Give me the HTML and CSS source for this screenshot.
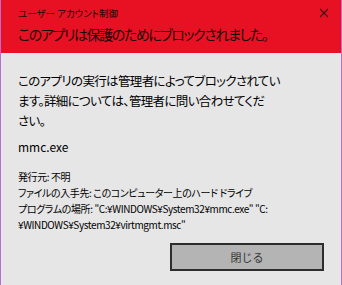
FILE: index.html
```html
<!DOCTYPE html>
<html lang="ja">
<head>
    <meta charset="UTF-8">
    <title>ユーザー アカウント制御</title>
    <link rel="stylesheet" href="styles.css">
</head>
<body>
    <div class="dialog">
        <div class="header">
            <div class="title-row">
                <span class="title">ユーザー アカウント制御</span>
                <svg class="close" width="10" height="10" viewBox="0 0 10 10">
                    <path d="M1 1 L9 9 M9 1 L1 9" stroke="#3a0a0e" stroke-width="1.1" fill="none"/>
                </svg>
            </div>
            <h1>このアプリは保護のためにブロックされました。</h1>
        </div>
        <div class="content">
            <p class="message">このアプリの実行は管理者によってブロックされてい<br>ます。詳細については、管理者に問い合わせてくだ<br>さい。</p>
            <p class="app-name">mmc.exe</p>
            <div class="details">
                <div>発行元: 不明</div>
                <div>ファイルの入手先: このコンピューター上のハード ドライブ</div>
                <div>プログラムの場所: "C:¥WINDOWS¥System32¥mmc.exe" "C:<br>¥WINDOWS¥System32¥virtmgmt.msc"</div>
            </div>
            <div class="actions">
                <button class="close-button">閉じる</button>
            </div>
        </div>
    </div>
</body>
</html>
```

FILE: styles.css
```css
html, body {
    margin: 0;
    padding: 0;
}

body {
    font-family: "Noto Sans CJK JP", "Noto Sans", sans-serif;
    font-feature-settings: "palt";
    background: #e6e6e6;
    width: 342px;
    height: 285px;
    overflow: hidden;
}

.dialog {
    height: 285px;
    box-sizing: border-box;
    border-left: 1px solid #c06ad0;
    border-right: 1px solid #c06ad0;
    background: #e6e6e6;
}

.header {
    background: #e81123;
    height: 53px;
    padding: 0 12px 0 17px;
    box-sizing: border-box;
    color: #1a0406;
}

.title-row {
    display: flex;
    justify-content: space-between;
    align-items: center;
    height: 25px;
}

.title {
    font-size: 9.5px;
    letter-spacing: 0;
    padding-top: 1px;
}

h1 {
    margin: 0;
    font-size: 14px;
    font-weight: normal;
    letter-spacing: -1.4px;
    line-height: 18px;
}

.content {
    padding: 18px 17px 0 17px;
    color: #000;
}

.message {
    margin: 0;
    font-size: 12.5px;
    line-height: 20px;
    letter-spacing: -0.65px;
    white-space: nowrap;
}

.app-name {
    margin: 7px 0 0 0;
    font-size: 12px;
    line-height: 18px;
}

.details {
    margin-top: 13px;
    font-size: 10px;
    line-height: 16px;
    letter-spacing: -0.4px;
    white-space: nowrap;
}

.actions {
    display: flex;
    justify-content: flex-end;
    margin-top: 10px;
}

.close-button {
    width: 154px;
    height: 28px;
    border: 2px solid #2d2d2d;
    background: #b4b4b4;
    color: #333;
    font-family: inherit;
    font-size: 11px;
    padding: 0;
}
```
